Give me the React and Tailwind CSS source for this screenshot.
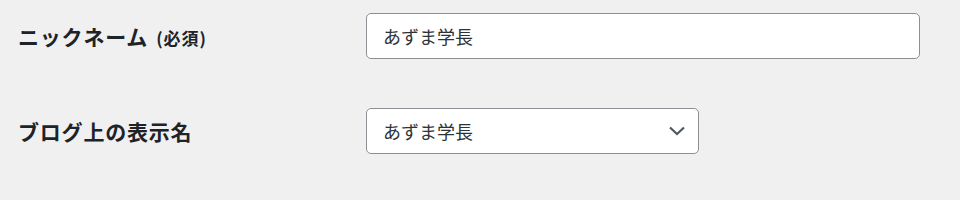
import React from "react";

const font = { fontFamily: '"Noto Sans CJK JP", "Noto Sans", sans-serif' };

export default function App() {
  return (
    <div
      className="w-[960px] h-[200px] bg-[#f0f0f1] text-[#1d2327] overflow-hidden"
      style={font}
    >
      <div className="flex flex-col gap-[49px] pt-[13px]">
        {/* ニックネーム */}
        <div className="flex items-center">
          <label className="w-[366px] pl-[18px] font-bold text-[21px] tracking-[0.8px] leading-none">
            ニックネーム<span className="ml-[8px] text-[17px] tracking-[1px]">(必須)</span>
          </label>
          <div className="w-[554px] h-[46px] bg-white border border-[#8c8f94] rounded-[5px] flex items-center px-[16px] text-[18px] text-[#2c3338]">
            あずま学長
          </div>
        </div>
        {/* 表示名 */}
        <div className="flex items-center">
          <label className="w-[366px] pl-[18px] font-bold text-[21px] tracking-[0.8px] leading-none">
            ブログ上の表示名
          </label>
          <div className="w-[333px] h-[46px] bg-white border border-[#8c8f94] rounded-[5px] flex items-center justify-between pl-[16px] pr-[12px] text-[18px] text-[#2c3338]">
            <span>あずま学長</span>
            <svg width="18" height="10" viewBox="0 0 18 10" fill="none">
              <path d="M2 1.5 L9 8 L16 1.5" stroke="#50575e" strokeWidth="2.2" />
            </svg>
          </div>
        </div>
      </div>
    </div>
  );
}
